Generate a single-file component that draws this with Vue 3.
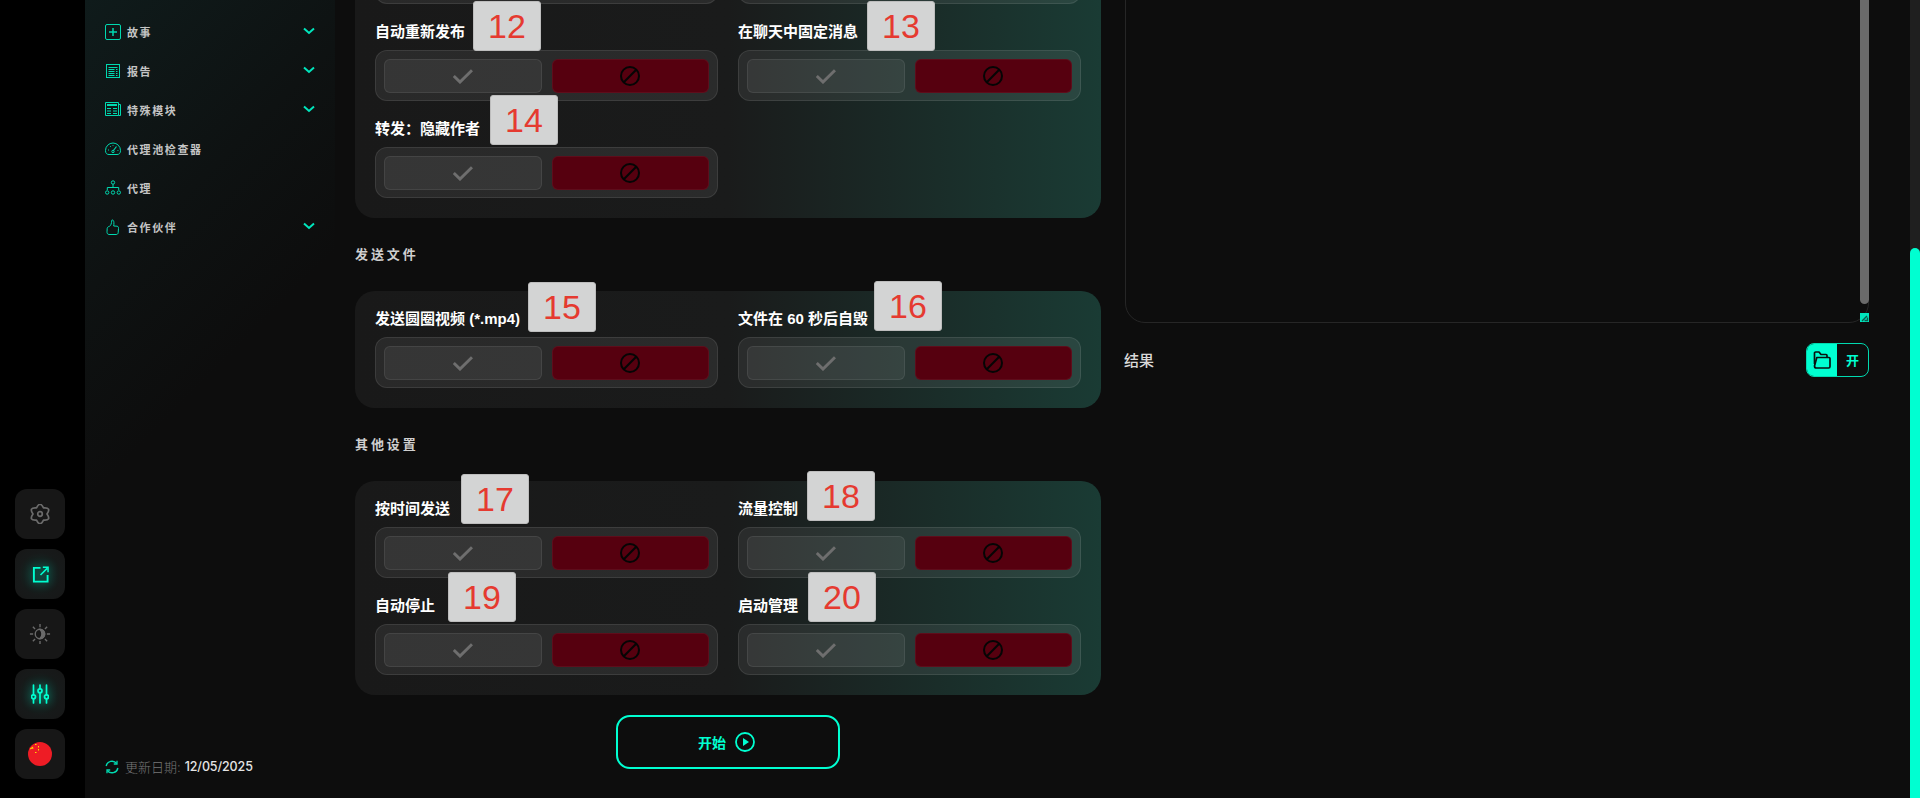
<template>
  <div class="page">
    <aside class="rail">
      <button class="rail-btn" type="button">
        <svg width="20" height="20" viewBox="0 0 20 20" fill="none" stroke="#6b6b6b" stroke-width="1.7" stroke-linejoin="round">
          <path d="M6.5 3.94 Q10 -3.5 13.5 3.94 Q21.7 3.25 17 10 Q21.7 16.75 13.5 16.06 Q10 23.5 6.5 16.06 Q-1.7 16.75 3 10 Q-1.7 3.25 6.5 3.94 Z" />
          <circle cx="10" cy="10" r="2.3" />
        </svg>
      </button>
      <button class="rail-btn glow" type="button">
        <svg width="17" height="17" viewBox="0 0 18 18" fill="none" stroke="#00ffd1" stroke-width="2">
          <path d="M9 2 H2 V16.5 H16.5 V9.5" />
          <path d="M9 9.5 L16 2.5 M11.5 1.2 H17 V6.5" stroke-width="1.6" />
        </svg>
      </button>
      <button class="rail-btn" type="button">
        <svg width="22" height="22" viewBox="0 0 24 24" fill="none" stroke="#6b6b6b" stroke-width="1.5">
          <circle cx="12" cy="12" r="5.2" />
          <path d="M12 7 A5 5 0 0 1 12 17 A7 7 0 0 0 12 7 Z" fill="#6b6b6b" />
          <path d="M12 1 V4.5 M12 19.5 V23 M1 12 H4.5 M19.5 12 H23 M4.2 4.2 L6.6 6.6 M17.4 17.4 L19.8 19.8 M4.2 19.8 L6.6 17.4 M17.4 6.6 L19.8 4.2" />
        </svg>
      </button>
      <button class="rail-btn glow" type="button">
        <svg width="18" height="20" viewBox="0 0 18 20" fill="none" stroke="#00ffd1" stroke-width="1.7" stroke-linecap="round">
          <path d="M2.5 1 V10.5 M2.5 15 V19 M9 1 V4.5 M9 9 V19 M15.5 1 V10.5 M15.5 15 V19" />
          <circle cx="2.5" cy="12.8" r="2" />
          <circle cx="9" cy="6.8" r="2" />
          <circle cx="15.5" cy="12.8" r="2" />
        </svg>
      </button>
      <button class="rail-btn" type="button">
        <svg width="24" height="24" viewBox="0 0 24 24">
          <circle cx="12" cy="12" r="12" fill="#ee1c25" />
          <path d="M2 6.5 L5 4.5 L5.4 7 L4 6.6 L2.4 7.6 Z" fill="#ffde00" />
          <rect x="7" y="2" width="1.5" height="1" fill="#ffde00" />
          <rect x="10" y="4" width="1" height="1.5" fill="#ffde00" />
          <rect x="10" y="7" width="1" height="1.5" fill="#ffde00" />
          <rect x="7" y="10" width="1.5" height="1" fill="#ffde00" />
        </svg>
      </button>
    </aside>

    <nav class="sidebar">
      <ul class="menu">
        <li v-for="m in menu" :key="m.label" class="menu-item">
          <svg class="menu-icon" width="16" height="16" viewBox="0 0 16 16" fill="none" stroke="#00d9b0" stroke-width="1">
            <g v-if="m.icon === 'plus'">
              <rect x=".5" y=".5" width="15" height="15" rx="1.5" />
              <path d="M8 4 V12 M4 8 H12" stroke-width="1.5" />
            </g>
            <g v-else-if="m.icon === 'report'">
              <rect x="1.5" y="1.5" width="13" height="13" />
              <path d="M3.5 4.5 H12.5 M3.5 6.5 H9.5 M3.5 8.5 H9.5 M3.5 10.5 H9.5 M3.5 12.5 H9.5 M11 6.5 H12.5 M11 8.5 H12.5 M11 10.5 H12.5 M11 12.5 H12.5" />
            </g>
            <g v-else-if="m.icon === 'news'">
              <path d="M.5 .5 H13.5 V13.5 H.5 Z M13.5 2.5 H15.5 V13.5 H13.5" />
              <rect x="2" y="2" width="10" height="2" fill="#00d9b0" stroke="none" />
              <path d="M2 6.5 H6 M2 9 H6 M2 11.5 H6 M8 6.5 H12 M8 9 H12 M8 11.5 H12" stroke-width="1.2" />
            </g>
            <g v-else-if="m.icon === 'gauge'">
              <path d="M4 13.5 H12 C14 13.5 15.5 12.5 15.5 9.5 A7.5 7.5 0 0 0 .5 9.5 C.5 12.5 2 13.5 4 13.5 Z" />
              <path d="M8 10 L11.5 5.5" stroke-width="1.2" />
              <circle cx="8" cy="10.5" r="1.2" />
              <path d="M3 9 H4 M5 5.5 H5.8 M8 4 V4.8 M12.5 9.5 H13.4" />
            </g>
            <g v-else-if="m.icon === 'tree'">
              <circle cx="8" cy="2.5" r="1.7" />
              <path d="M8 4.2 V7.5 M2.3 10 V7.5 H13.7 V10" />
              <circle cx="2.2" cy="12.5" r="1.7" />
              <circle cx="8" cy="12.5" r="1.7" />
              <circle cx="13.8" cy="12.5" r="1.7" />
            </g>
            <path v-else d="M3 15.2 C2 14.6 2 13.6 2 12.8 L2.2 9.4 C2.3 8.2 3.4 7.6 4.6 7.2 C5.8 6.6 6.6 4.6 6.8 1.2 C8.2 0.4 8.8 2 8.9 3.6 C9 5 8.8 5.8 8.7 7 L12 7.2 C13.4 7.4 13.6 8.4 13.5 9.6 L13.2 13.6 C13.1 15 12.2 15.5 11 15.5 H5 C4 15.5 3.6 15.5 3 15.2 Z" />
          </svg>
          <span class="menu-label">{{ m.label }}</span>
          <svg v-if="m.more" class="menu-arrow" width="12" height="8" viewBox="0 0 12 8" fill="none" stroke="#00e6bd" stroke-width="2">
            <path d="M1 1.5 L6 6 L11 1.5" />
          </svg>
        </li>
      </ul>
      <div class="updated">
        <svg width="14" height="14" viewBox="0 0 14 14" fill="none" stroke="#00d9b0" stroke-width="1.5">
          <path d="M1.2 6 A5.9 5.9 0 0 1 11.6 3.4 M12.8 8 A5.9 5.9 0 0 1 2.4 10.6" />
          <path d="M12 .8 V4 H8.8 M2 13.2 V10 H5.2" stroke-width="1.3" />
        </svg>
        <span class="updated-key">更新日期:</span>
        <span class="updated-date">12/05/2025</span>
      </div>
    </nav>

    <main class="content">
      <section class="form">
        <template v-for="(group, gi) in groups" :key="gi">
          <h3 v-if="group.title" class="group-title">{{ group.title }}</h3>
          <div class="card">
            <div v-for="(f, fi) in group.fields" :key="fi" class="field">
              <label class="field-label">{{ f.label }}</label>
              <div class="switch">
                <button class="opt opt-yes" type="button">
                  <svg width="20" height="15" viewBox="0 0 20 15" fill="none" stroke="#6e6e6e" stroke-width="3">
                    <path d="M0.8 7 L7 13 L19 1.2" />
                  </svg>
                </button>
                <button class="opt opt-no" type="button">
                  <svg width="20" height="20" viewBox="0 0 20 20" fill="none" stroke="#050505" stroke-width="2">
                    <circle cx="10" cy="10" r="9" />
                    <path d="M3.8 16.2 L16.2 3.8" />
                  </svg>
                </button>
              </div>
              <span v-if="f.no" class="callout" :style="{ left: f.x + 'px', top: f.y + 'px' }">{{ f.no }}</span>
            </div>
          </div>
        </template>
        <button class="start" type="button">
          开始
          <svg width="20" height="20" viewBox="0 0 20 20" fill="none" stroke="#00ffd1" stroke-width="1.8">
            <circle cx="10" cy="10" r="9" />
            <path d="M8 6 L14 10 L8 14 Z" fill="#00ffd1" stroke="none" />
          </svg>
        </button>
      </section>

      <section class="side">
        <div class="textarea">
          <span class="ta-thumb"></span>
          <span class="ta-resize">
            <svg width="9" height="9" viewBox="0 0 9 9" fill="none" stroke="#0b5a4c" stroke-width="1.4">
              <path d="M2 8 L7 3 M4.5 7.5 H7.5 V4.5" />
            </svg>
          </span>
        </div>
        <div class="result">
          <span class="result-label">结果</span>
          <div class="picker">
            <span class="picker-icon">
              <svg width="20" height="20" viewBox="0 0 20 20" fill="none" stroke="#08120f" stroke-width="1.7" stroke-linejoin="round">
                <path d="M2.5 14 V3 C2.5 2.4 3 2 3.6 2 H7 L9 4.5 H14 C14.6 4.5 15 5 15 5.5 V7" />
                <path d="M4.8 7.5 H17 C17.6 7.5 18 8 18 8.6 V16.5 C18 17.2 17.5 18 16.6 18 H4.4 C3.4 18 2.5 17 2.5 16 Z" />
              </svg>
            </span>
            <span class="picker-text">开</span>
          </div>
        </div>
      </section>
    </main>

    <div class="scrollbar"><span class="scrollbar-thumb"></span></div>
  </div>
</template>

<script setup>
const menu = [
  { label: '故事', icon: 'plus', more: true },
  { label: '报告', icon: 'report', more: true },
  { label: '特殊模块', icon: 'news', more: true },
  { label: '代理池检查器', icon: 'gauge' },
  { label: '代理', icon: 'tree' },
  { label: '合作伙伴', icon: 'thumb', more: true },
]

// x/y of a callout are relative to its field
const groups = [
  {
    fields: [
      { label: '', no: null },
      { label: '', no: null },
      { label: '自动重新发布', no: 12, x: 98, y: -20 },
      { label: '在聊天中固定消息', no: 13, x: 129, y: -20 },
      { label: '转发：隐藏作者', no: 14, x: 115, y: -23 },
    ],
  },
  {
    title: '发送文件',
    fields: [
      { label: '发送圆圈视频 (*.mp4)', no: 15, x: 153, y: -26 },
      { label: '文件在 60 秒后自毁', no: 16, x: 136, y: -27 },
    ],
  },
  {
    title: '其他设置',
    fields: [
      { label: '按时间发送', no: 17, x: 86, y: -24 },
      { label: '流量控制', no: 18, x: 69, y: -27 },
      { label: '自动停止', no: 19, x: 73, y: -23 },
      { label: '启动管理', no: 20, x: 70, y: -23 },
    ],
  },
]
</script>

<style>
html,
body {
  background: #0d0d0d;
}
</style>

<style scoped>
.page {
  display: flex;
  height: 798px;
  overflow: hidden;
  background: #0d0d0d;
  font-family: "Inter", "Noto Sans CJK SC", sans-serif;
  color: #fff;
}

.rail {
  display: flex;
  flex-direction: column;
  justify-content: flex-end;
  align-items: center;
  gap: 10px;
  flex: 0 0 85px;
  padding: 0 5px 19px 0;
  box-sizing: border-box;
  background: #000;
}
.rail-btn {
  display: flex;
  align-items: center;
  justify-content: center;
  width: 50px;
  height: 50px;
  padding: 0;
  border: 0;
  border-radius: 12px;
  background: #171717;
}
.rail-btn.glow {
  background: radial-gradient(circle, #12312c 0%, #171a1a 60%, #171717 100%);
}
.rail-btn.glow svg {
  filter: drop-shadow(0 0 4px rgba(0, 255, 209, 0.55));
}

.sidebar {
  display: flex;
  flex-direction: column;
  justify-content: space-between;
  flex: 0 0 250px;
  box-sizing: border-box;
  padding: 12px 0 22px 20px;
  background: linear-gradient(135deg, #0f1b1b 0%, #0e1212 28%, #0d0d0d 48%);
}
.menu {
  margin: 0;
  padding: 0;
  list-style: none;
}
.menu-item {
  display: flex;
  align-items: center;
  height: 39px;
  padding-right: 20px;
}
.menu-icon {
  flex: none;
}
.menu-label {
  flex: 1;
  margin-left: 6px;
  font-size: 11px;
  font-weight: 700;
  letter-spacing: 1.6px;
  color: #c4c4c4;
}
.menu-arrow {
  margin-top: -2px;
}

.updated {
  display: flex;
  align-items: center;
  font-size: 13px;
  line-height: 18px;
}
.updated-key {
  margin-left: 6px;
  font-weight: 300;
  color: #777;
}
.updated-date {
  margin-left: 4px;
  font-size: 12.5px;
  font-weight: 500;
  letter-spacing: -0.1px;
  color: #e4e4e4;
}

.content {
  display: flex;
  flex: 1;
  gap: 24px;
  align-items: flex-start;
  margin-top: -93px;
  padding: 0 41px 0 20px;
}

.form {
  display: flex;
  flex-direction: column;
  flex: 0 0 746px;
}
.group-title {
  margin: 0;
  height: 73px;
  line-height: 73px;
  font-size: 13px;
  font-weight: 700;
  letter-spacing: 2.9px;
  color: #cfcfcf;
}
.card {
  display: grid;
  grid-template-columns: 343px 343px;
  gap: 17px 20px;
  padding: 17px 20px 20px;
  border-radius: 20px;
  background: linear-gradient(90deg, #191919 0%, #1a1b1b 50%, #1a3b34 100%);
}
.field {
  position: relative;
}
.field-label {
  display: block;
  height: 22px;
  margin-bottom: 7px;
  font-family: "Liberation Sans", "Noto Sans CJK SC", sans-serif;
  font-size: 15px;
  font-weight: 700;
  line-height: 22px;
  white-space: nowrap;
  color: #fff;
}
.switch {
  display: flex;
  gap: 10px;
  height: 51px;
  padding: 8px 8px 7px;
  box-sizing: border-box;
  border: 1px solid rgba(255, 255, 255, 0.09);
  border-radius: 12px;
  background: rgba(255, 255, 255, 0.07);
}
.opt {
  display: flex;
  align-items: center;
  justify-content: center;
  flex: 1;
  padding: 0;
  border: 1px solid rgba(255, 255, 255, 0.08);
  border-radius: 6px;
}
.opt-yes {
  background: rgba(255, 255, 255, 0.06);
}
.opt-no {
  background: #56000f;
  border-color: rgba(255, 255, 255, 0.05);
}
.callout {
  position: absolute;
  display: flex;
  align-items: center;
  justify-content: center;
  width: 68px;
  height: 50px;
  box-sizing: border-box;
  border: 1px solid #bdbdbd;
  border-radius: 3px;
  background: #d3d4d4;
  font-family: "Liberation Sans", sans-serif;
  font-size: 34px;
  color: #e53a30;
}

.start {
  display: flex;
  align-items: center;
  justify-content: center;
  gap: 9px;
  align-self: center;
  width: 224px;
  height: 54px;
  margin-top: 20px;
  padding: 0 3px 0 0;
  border: 2px solid #00ffd1;
  border-radius: 14px;
  background: transparent;
  font-family: inherit;
  font-size: 14px;
  font-weight: 700;
  color: #00ffd1;
}

.side {
  display: flex;
  flex-direction: column;
  flex: 1;
}
.textarea {
  position: relative;
  height: 416px;
  box-sizing: border-box;
  border: 1px solid #262626;
  border-radius: 20px;
}
.ta-thumb {
  position: absolute;
  top: 0;
  right: -1px;
  width: 9px;
  height: 396px;
  border-radius: 0 0 5px 5px;
  background: #6a6a6a;
}
.ta-resize {
  position: absolute;
  right: -1px;
  bottom: 0;
  display: flex;
  width: 9px;
  height: 9px;
  background: #00e6bd;
}
.result {
  display: flex;
  align-items: center;
  justify-content: space-between;
  margin-top: 20px;
  margin-left: -1px;
}
.result-label {
  margin-top: -2px;
  font-size: 15px;
  font-weight: 500;
  color: #d8d8d8;
}
.picker {
  display: flex;
  width: 63px;
  height: 34px;
  box-sizing: border-box;
  border: 1px solid #00d9b0;
  border-radius: 8px;
  overflow: hidden;
}
.picker-icon {
  display: flex;
  align-items: center;
  justify-content: center;
  width: 30px;
  background: #00ffd1;
}
.picker-text {
  flex: 1;
  font-size: 13px;
  font-weight: 700;
  line-height: 32px;
  text-align: center;
  color: #00ffd1;
}

.scrollbar {
  flex: 0 0 10px;
  background: #1f1f1f;
}
.scrollbar-thumb {
  display: block;
  height: 550px;
  margin-top: 248px;
  border-radius: 5px 5px 0 0;
  background: #00ffd1;
}
</style>
